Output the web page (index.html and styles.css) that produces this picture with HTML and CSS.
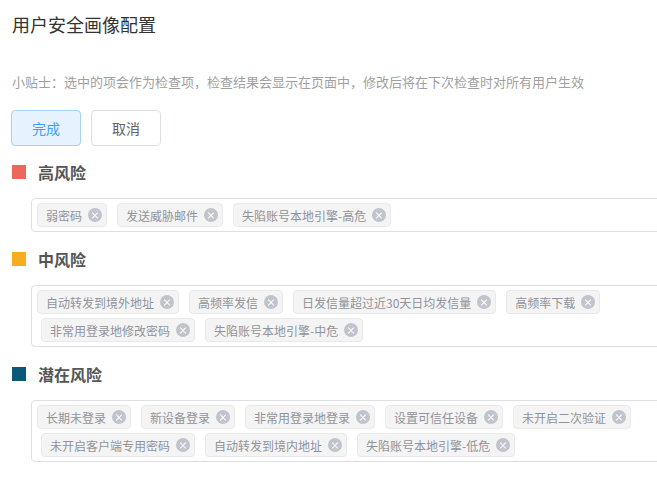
FILE: index.html
```html
<html>
    <head>
        <meta charset="utf-8">
        <link rel="stylesheet" href="styles.css">
    </head>
    <body>
        <div class="page">
            <h1 class="title">用户安全画像配置</h1>
            <p class="tip">小贴士：选中的项会作为检查项，检查结果会显示在页面中，修改后将在下次检查时对所有用户生效</p>
            <div class="actions">
                <button class="btn btn-primary">完成</button>
                <button class="btn">取消</button>
            </div>

            <div class="section">
                <div class="section-head"><span class="mark mark-high"></span>高风险</div>
                <div class="tags">
                    <span class="tag">弱密码<i class="tag-close"></i></span>
                    <span class="tag">发送威胁邮件<i class="tag-close"></i></span>
                    <span class="tag">失陷账号本地引擎-高危<i class="tag-close"></i></span>
                </div>
            </div>

            <div class="section">
                <div class="section-head"><span class="mark mark-mid"></span>中风险</div>
                <div class="tags">
                    <span class="tag">自动转发到境外地址<i class="tag-close"></i></span>
                    <span class="tag">高频率发信<i class="tag-close"></i></span>
                    <span class="tag">日发信量超过近30天日均发信量<i class="tag-close"></i></span>
                    <span class="tag">高频率下载<i class="tag-close"></i></span>
                    <span class="tag">非常用登录地修改密码<i class="tag-close"></i></span>
                    <span class="tag">失陷账号本地引擎-中危<i class="tag-close"></i></span>
                </div>
            </div>

            <div class="section">
                <div class="section-head"><span class="mark mark-low"></span>潜在风险</div>
                <div class="tags">
                    <span class="tag">长期未登录<i class="tag-close"></i></span>
                    <span class="tag">新设备登录<i class="tag-close"></i></span>
                    <span class="tag">非常用登录地登录<i class="tag-close"></i></span>
                    <span class="tag">设置可信任设备<i class="tag-close"></i></span>
                    <span class="tag">未开启二次验证<i class="tag-close"></i></span>
                    <span class="tag">未开启客户端专用密码<i class="tag-close"></i></span>
                    <span class="tag">自动转发到境内地址<i class="tag-close"></i></span>
                    <span class="tag">失陷账号本地引擎-低危<i class="tag-close"></i></span>
                </div>
            </div>
        </div>
    </body>
</html>
```

FILE: styles.css
```css
body {
    margin: 0;
    background-color: #ffffff;
    font-family: "Noto Sans CJK SC", "Noto Sans", sans-serif;
}
.page {
    padding: 12px 0 0 12px;
    overflow: hidden;
}
.title {
    margin: 0;
    font-size: 18px;
    line-height: 24px;
    font-weight: normal;
    color: #333333;
}
.tip {
    margin: 36px 0 0 0;
    font-size: 13px;
    line-height: 20px;
    color: #a0a0a0;
}
.actions {
    display: flex;
    gap: 10px;
    margin: 18px 0 0 -1px;
}
.btn {
    width: 70px;
    height: 36px;
    padding: 0;
    font: 14px "Noto Sans CJK SC", sans-serif;
    color: #606266;
    background-color: #ffffff;
    border: 1px solid #dcdfe6;
    border-radius: 4px;
}
.btn-primary {
    color: #409eff;
    background-color: #e6f2fd;
    border-color: #a6d2fb;
}
.section {
    margin-top: 16px;
}
.section + .section {
    margin-top: 17px;
}
.section-head {
    display: flex;
    align-items: center;
    height: 20px;
    font-size: 16px;
    font-weight: bold;
    color: #555555;
    margin-bottom: 16px;
}
.mark {
    width: 14px;
    height: 14px;
    margin-right: 12px;
}
.mark-high {
    background-color: #ee675b;
}
.mark-mid {
    background-color: #f8ad1f;
}
.mark-low {
    background-color: #0d587a;
}
.tags {
    display: flex;
    flex-wrap: wrap;
    column-gap: 10px;
    width: 700px;
    margin-left: 19px;
    padding: 2px 0 2px 9px;
    box-sizing: border-box;
    border: 1px solid #dcdfe6;
    border-radius: 4px;
}
.tag {
    display: flex;
    align-items: center;
    height: 24px;
    margin: 2px 0;
    padding: 0 4px 0 8px;
    box-sizing: border-box;
    font-size: 12px;
    color: #909399;
    background-color: #f4f4f5;
    border: 1px solid #e9e9eb;
    border-radius: 4px;
    white-space: nowrap;
}
.tag:first-child {
    margin-left: -4px;
}
.tag-close {
    position: relative;
    width: 14px;
    height: 14px;
    margin-left: 6px;
    border-radius: 50%;
    background-color: #c0c4cc;
}
.tag-close::before,
.tag-close::after {
    content: "";
    position: absolute;
    left: 3px;
    top: 6.5px;
    width: 8px;
    height: 1px;
    background-color: #ffffff;
    transform: rotate(45deg);
}
.tag-close::after {
    transform: rotate(-45deg);
}
```
